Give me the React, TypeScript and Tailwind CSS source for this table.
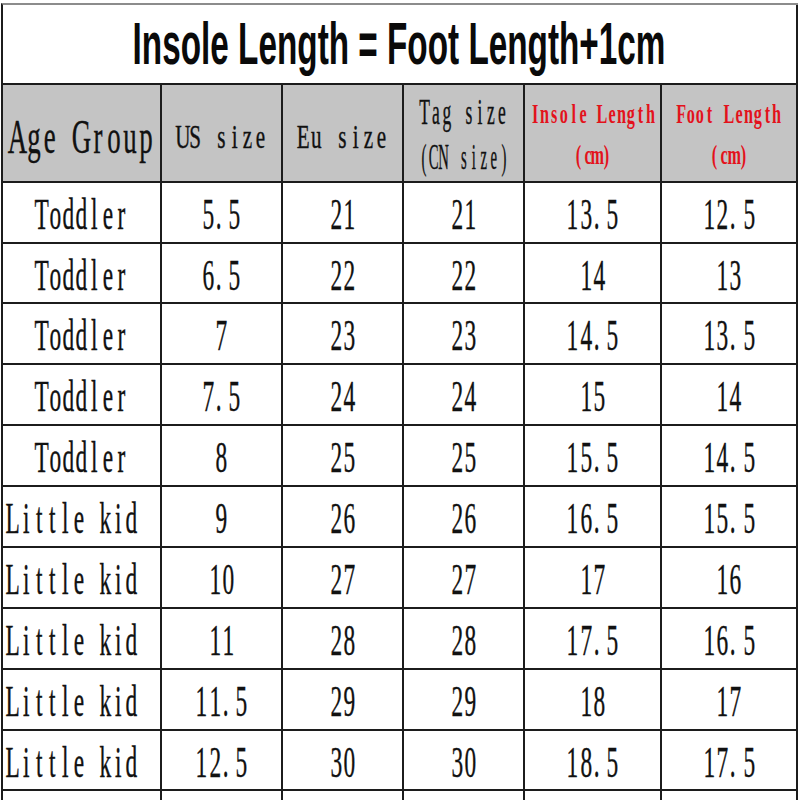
import React from "react";

// 等寬襯線字：每個字元一格固定寬度，字形本身在格內橫向壓窄
function Mono({
	text,
	pitch,
	glyph,
	className = "",
}: {
	text: string;
	pitch: string;
	glyph: string;
	className?: string;
}) {
	return (
		<span className={`inline-flex shrink-0 whitespace-nowrap leading-none ${className}`}>
			{[...text].map((c, i) => (
				<span key={i} className={`inline-flex shrink-0 ${pitch} ${c === "." ? "justify-start" : "justify-center"}`}>
					<span className={`inline-block shrink-0 leading-none ${glyph} ${c === "." ? "-ml-[2px]" : ""}`}>
						{c === " " ? "\u00a0" : c}
					</span>
				</span>
			))}
		</span>
	);
}

const rows = [
	["Toddler", "5.5", "21", "21", "13.5", "12.5"],
	["Toddler", "6.5", "22", "22", "14", "13"],
	["Toddler", "7", "23", "23", "14.5", "13.5"],
	["Toddler", "7.5", "24", "24", "15", "14"],
	["Toddler", "8", "25", "25", "15.5", "14.5"],
	["Little kid", "9", "26", "26", "16.5", "15.5"],
	["Little kid", "10", "27", "27", "17", "16"],
	["Little kid", "11", "28", "28", "17.5", "16.5"],
	["Little kid", "11.5", "29", "29", "18", "17"],
	["Little kid", "12.5", "30", "30", "18.5", "17.5"],
];

const rowHeights = [
	"h-[61px]",
	"h-[60px]",
	"h-[61px]",
	"h-[61px]",
	"h-[61px]",
	"h-[61px]",
	"h-[61px]",
	"h-[61px]",
	"h-[61px]",
	"h-[60px]",
];

const cell = "flex items-center justify-center border-r-2 border-b-2 border-[#1c1c1c]";
const serif = "font-['Liberation_Serif',serif] text-[#111] [-webkit-text-stroke:0.4px_#111]";
const bodyGlyph = `${serif} text-[45px] scale-x-[0.52]`;
const redGlyph = "font-['Liberation_Serif',serif] text-[27px] font-bold text-[#e3121c] scale-x-[0.6]";

export default function App() {
	return (
		<div className="h-[800px] w-[800px] overflow-hidden bg-white pt-[3px]">
			<div className="ml-[1px] w-[797px] border-t-2 border-l-2 border-t-[#8c8c8c] border-l-[#1c1c1c]">
				{/* 標題列 */}
				<div className="flex h-[80px] items-center justify-center border-r-2 border-b-2 border-[#1c1c1c]">
					<span className="inline-block shrink-0 whitespace-nowrap font-['Liberation_Sans',sans-serif] text-[60px] font-bold leading-none text-[#0a0a0a] scale-x-[0.555]">
						Insole Length = Foot Length+1cm
					</span>
				</div>

				<div className="grid grid-cols-[159px_121px_121px_121px_137px_136px]">
					{/* 表頭 */}
					<div className={`${cell} h-[98px] bg-[#c4c4c4] pt-2`}>
						<Mono text="Age Group" pitch="w-[16px]" glyph={`${serif} text-[48px] scale-x-[0.56]`} />
					</div>
					<div className={`${cell} h-[98px] bg-[#c4c4c4] pt-2`}>
						<Mono text="US size" pitch="w-[13px]" glyph={`${serif} text-[33px] scale-x-[0.64]`} />
					</div>
					<div className={`${cell} h-[98px] bg-[#c4c4c4] pt-2`}>
						<Mono text="Eu size" pitch="w-[13px]" glyph={`${serif} text-[33px] scale-x-[0.64]`} />
					</div>
					<div className={`${cell} h-[98px] flex-col gap-[10px] bg-[#c4c4c4] pt-1`}>
						<Mono text="Tag size" pitch="w-[11px]" glyph={`${serif} text-[35px] scale-x-[0.5]`} />
						<Mono text="(CN size)" pitch="w-[10px]" glyph={`${serif} text-[35px] scale-x-[0.42]`} />
					</div>
					<div className={`${cell} h-[98px] flex-col gap-[14px] bg-[#c4c4c4] pt-1`}>
						<Mono text="Insole Length" pitch="w-[9.6px]" glyph={redGlyph} />
						<Mono text="(cm)" pitch="w-[9.6px]" glyph={redGlyph} />
					</div>
					<div className={`${cell} h-[98px] flex-col gap-[14px] bg-[#c4c4c4] pt-1`}>
						<Mono text="Foot Length" pitch="w-[9.6px]" glyph={redGlyph} />
						<Mono text="(cm)" pitch="w-[9.6px]" glyph={redGlyph} />
					</div>

					{/* 資料列 */}
					{rows.map((r, ri) =>
						r.map((v, ci) => {
							const left = ci === 0 && v.length > 8;
							return (
								<div
									key={`${ri}-${ci}`}
									className={`${cell} ${rowHeights[ri]} pt-1 ${left ? "justify-start pl-[3px]" : ""}`}
								>
									<Mono text={v} pitch="w-[13.2px]" glyph={bodyGlyph} />
								</div>
							);
						}),
					)}

					{/* 底部被裁切的下一列 */}
					{[0, 1, 2, 3, 4, 5].map((i) => (
						<div key={`tail-${i}`} className="h-[20px] border-r-2 border-[#1c1c1c]" />
					))}
				</div>
			</div>
		</div>
	);
}
